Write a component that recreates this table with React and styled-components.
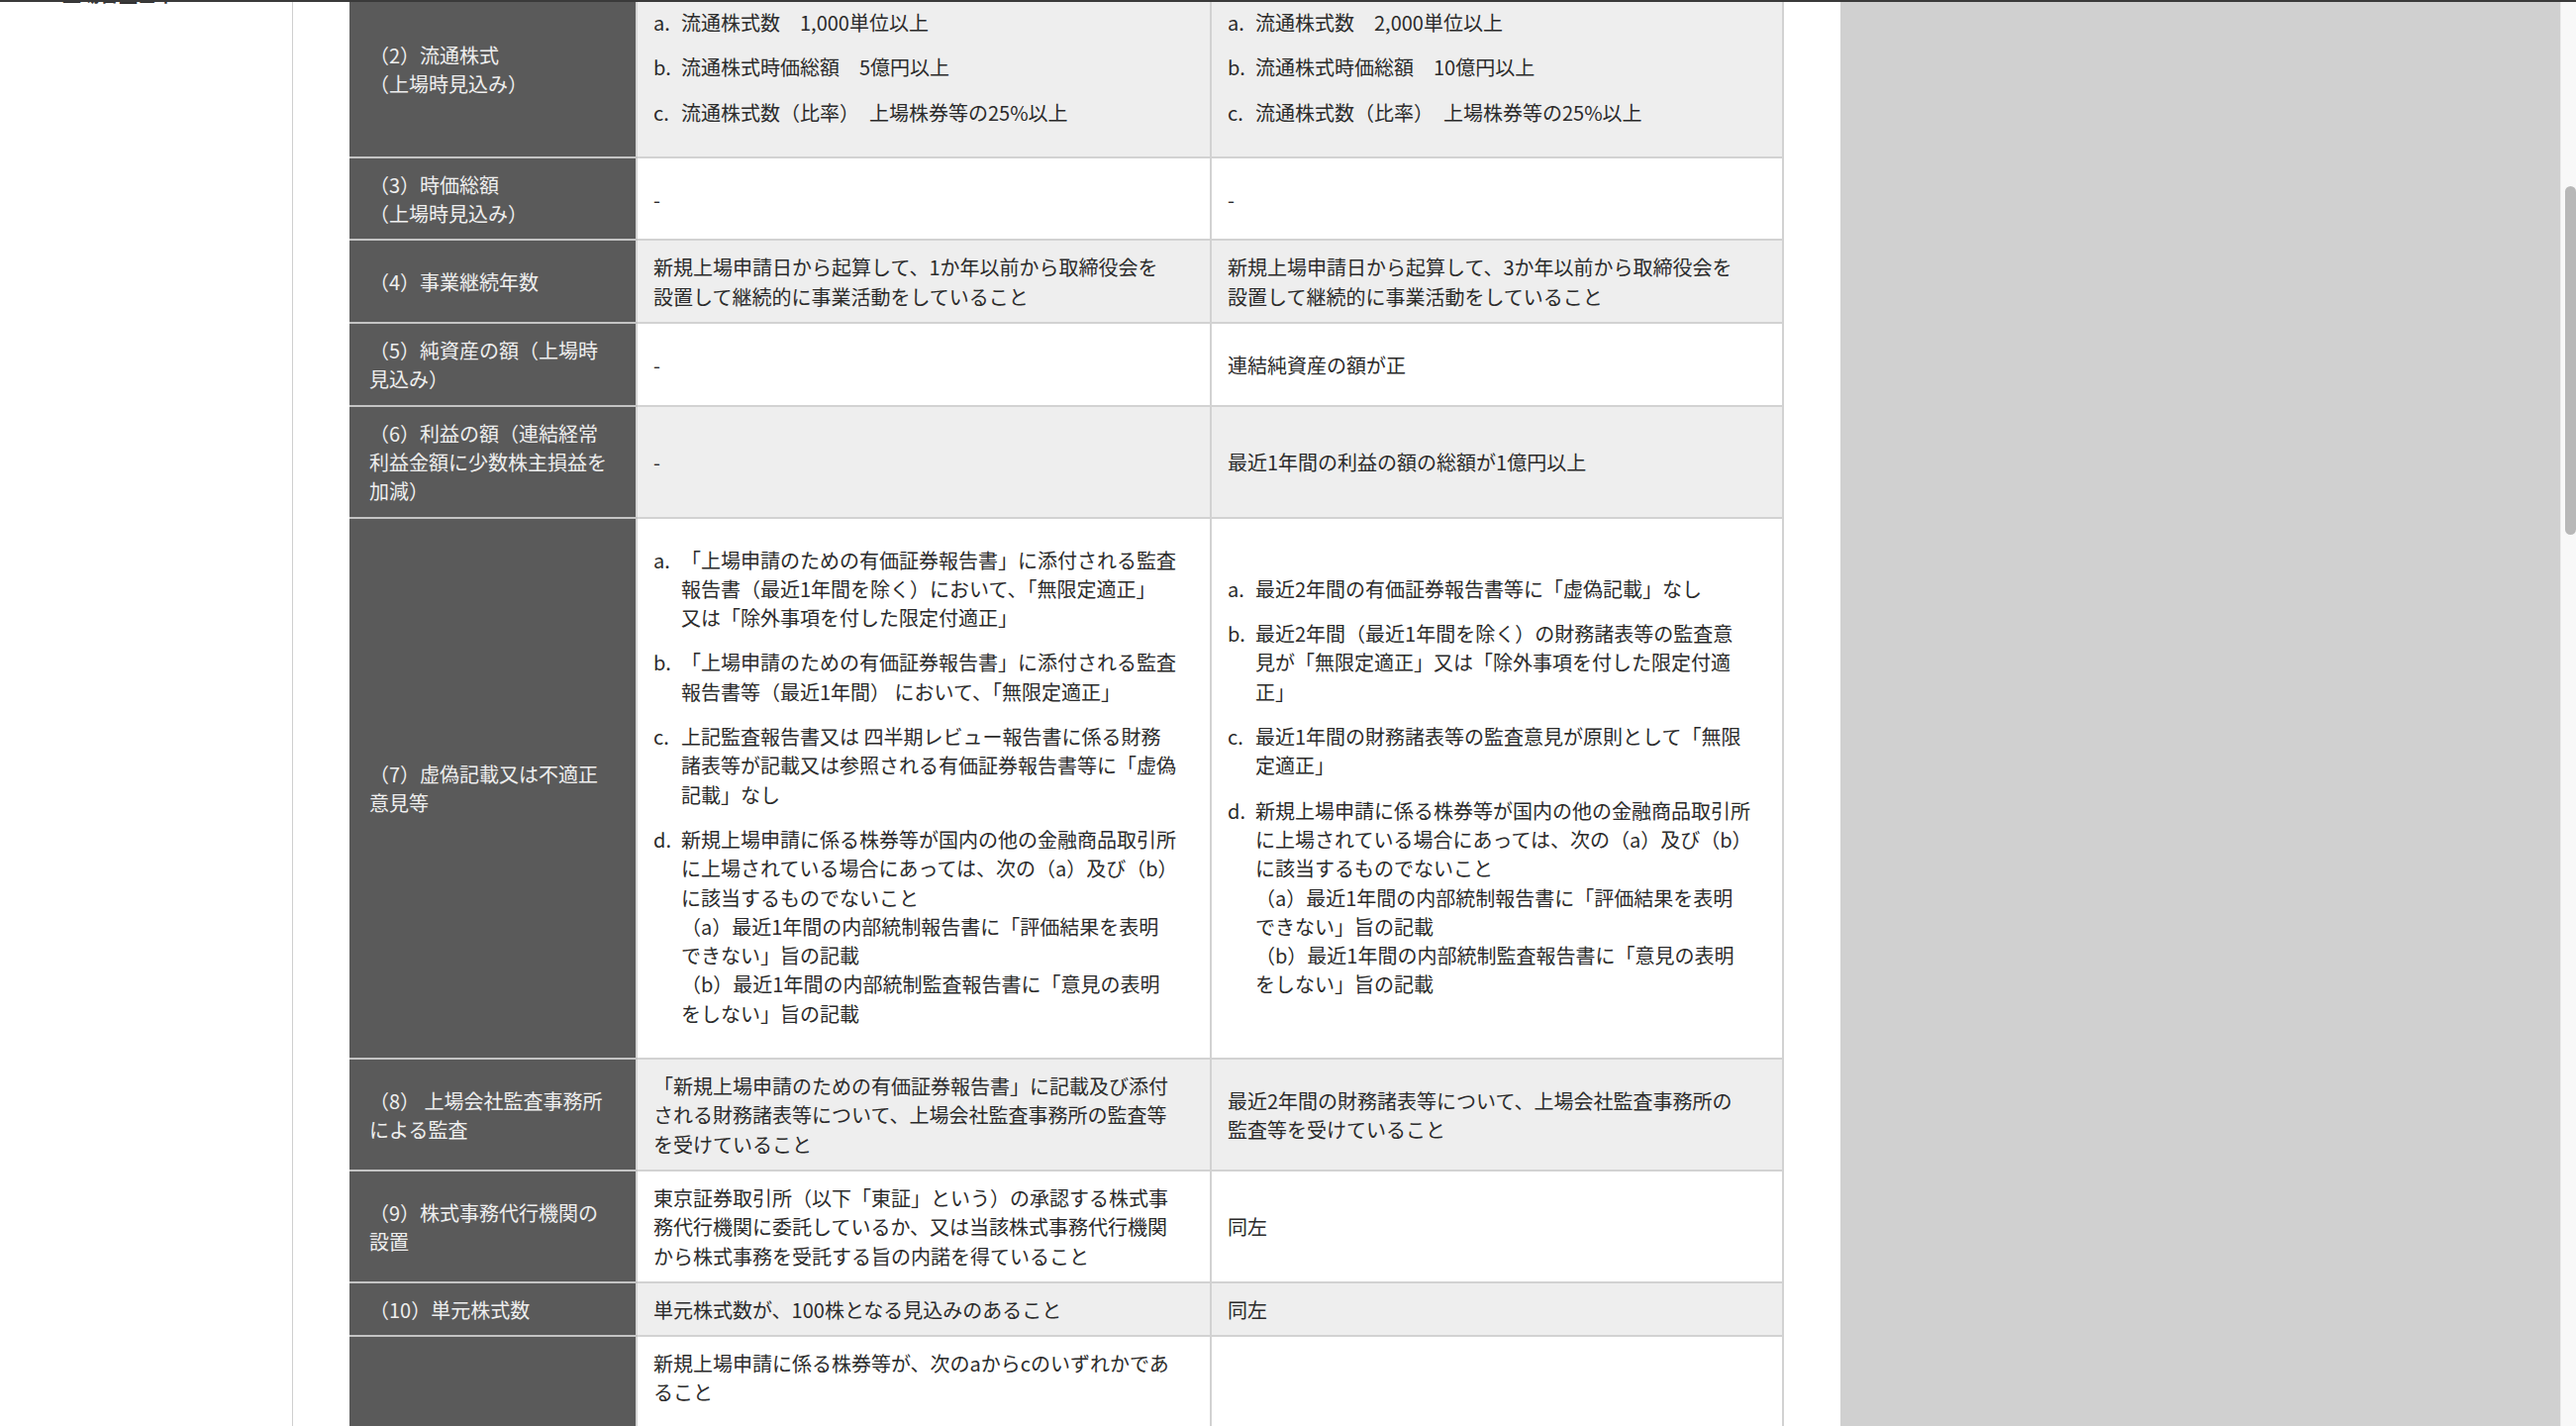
import React, { useLayoutEffect, useRef } from 'react';
import styled, { createGlobalStyle } from 'styled-components';

const GlobalStyle = createGlobalStyle`
  html, body {
    margin: 0;
    height: 100%;
    overflow: hidden;
  }
  body {
    background: #fff;
    color: #2b2b2b;
    font-family: "Noto Sans CJK JP", "Noto Sans", sans-serif;
  }
`;

// Frame
const Window = styled.div`
  height: 100vh;
  display: flex;
  flex-direction: column;
`;

const TopEdge = styled.div`
  flex: none;
  height: 2px;
  background: #3a3a3a;
`;

const Viewport = styled.div`
  flex: 1;
  min-height: 0;
  display: flex;
`;

const Scroller = styled.div`
  flex: 1;
  overflow: hidden;
`;

const Page = styled.div`
  display: grid;
  grid-template-columns: 296px 1fr 727px;
`;

const Sidebar = styled.aside`
  border-right: 1px solid #cfcfcf;
  padding-left: 63px;
`;

const SideTitle = styled.div`
  font-size: 19px;
  line-height: 26px;
  font-weight: 700;
  color: #333;
`;

const Main = styled.main`
  padding-left: 57px;
`;

const Aside = styled.div`
  background: #d0d0d0;
`;

const ScrollTrack = styled.div`
  flex: none;
  width: 16px;
  background: #f8f8f8;
  border-left: 1px solid #ececec;
  box-sizing: border-box;
`;

const ScrollThumb = styled.div`
  width: 11px;
  height: 352px;
  margin: 186px 0 0 4px;
  border-radius: 6px;
  background: #b8b8b8;
`;

// Table
const Table = styled.table`
  width: 1448px;
  border-collapse: collapse;
  table-layout: fixed;
  font-size: 20px;
  line-height: 29.3px;
`;

const Col = styled.col`
  width: ${p => p.$w}px;
`;

const Row = styled.tr`
  background: ${p => (p.$shade ? '#eeeeee' : '#ffffff')};
`;

const Head = styled.th`
  background: #5a5a5a;
  color: #eeeeee;
  font-weight: normal;
  text-align: left;
  vertical-align: middle;
  padding: 12px 20px 11px;
  border-bottom: 2px solid #c4c4c4;
  border-right: 2px solid #d6d6d6;
`;

const Cell = styled.td`
  vertical-align: middle;
  padding: 12px 16px 11px;
  color: #2b2b2b;
  border-bottom: 2px solid #d2d2d2;
  border-right: 2px solid #d2d2d2;
`;

const Items = styled.ul`
  list-style: none;
  margin: 15px 0 19px;
  padding: 0;
`;

const Item = styled.li`
  display: flex;
  & + & {
    margin-top: 16px;
  }
`;

const Mark = styled.span`
  flex: none;
  width: 28px;
`;

const Lines = ({ text }) =>
  text.split('\n').map((line, i) => (
    <React.Fragment key={i}>
      {i > 0 && <br />}
      {line}
    </React.Fragment>
  ));

const List = ({ items }) => (
  <Items>
    {items.map(([m, t]) => (
      <Item key={m}>
        <Mark>{m}</Mark>
        <span><Lines text={t} /></span>
      </Item>
    ))}
  </Items>
);

const Content = ({ value }) => {
  if (typeof value === 'string') return <Lines text={value} />;
  if (value.lead) {
    return (
      <>
        <Lines text={value.lead} />
        <List items={value.items} />
      </>
    );
  }
  return <List items={value} />;
};

const naibu =
  '新規上場申請に係る株券等が国内の他の金融商品取引所\nに上場されている場合にあっては、次の（a）及び（b）\nに該当するものでないこと\n（a）最近1年間の内部統制報告書に「評価結果を表明\nできない」旨の記載\n（b）最近1年間の内部統制監査報告書に「意見の表明\nをしない」旨の記載';

const rows = [
  {
    label: '（2）流通株式\n（上場時見込み）',
    growth: [
      ['a.', '流通株式数　1,000単位以上'],
      ['b.', '流通株式時価総額　5億円以上'],
      ['c.', '流通株式数（比率）　上場株券等の25%以上'],
    ],
    standard: [
      ['a.', '流通株式数　2,000単位以上'],
      ['b.', '流通株式時価総額　10億円以上'],
      ['c.', '流通株式数（比率）　上場株券等の25%以上'],
    ],
  },
  { label: '（3）時価総額\n（上場時見込み）', growth: '-', standard: '-' },
  {
    label: '（4）事業継続年数',
    growth: '新規上場申請日から起算して、1か年以前から取締役会を\n設置して継続的に事業活動をしていること',
    standard: '新規上場申請日から起算して、3か年以前から取締役会を\n設置して継続的に事業活動をしていること',
  },
  { label: '（5）純資産の額（上場時\n見込み）', growth: '-', standard: '連結純資産の額が正' },
  {
    label: '（6）利益の額（連結経常\n利益金額に少数株主損益を\n加減）',
    growth: '-',
    standard: '最近1年間の利益の額の総額が1億円以上',
  },
  {
    label: '（7）虚偽記載又は不適正\n意見等',
    growth: [
      ['a.', '「上場申請のための有価証券報告書」に添付される監査\n報告書（最近1年間を除く）において、「無限定適正」\n又は「除外事項を付した限定付適正」'],
      ['b.', '「上場申請のための有価証券報告書」に添付される監査\n報告書等（最近1年間） において、「無限定適正」'],
      ['c.', '上記監査報告書又は 四半期レビュー報告書に係る財務\n諸表等が記載又は参照される有価証券報告書等に「虚偽\n記載」なし'],
      ['d.', naibu],
    ],
    standard: [
      ['a.', '最近2年間の有価証券報告書等に「虚偽記載」なし'],
      ['b.', '最近2年間（最近1年間を除く）の財務諸表等の監査意\n見が「無限定適正」又は「除外事項を付した限定付適\n正」'],
      ['c.', '最近1年間の財務諸表等の監査意見が原則として「無限\n定適正」'],
      ['d.', naibu],
    ],
  },
  {
    label: '（8） 上場会社監査事務所\nによる監査',
    growth: '「新規上場申請のための有価証券報告書」に記載及び添付\nされる財務諸表等について、上場会社監査事務所の監査等\nを受けていること',
    standard: '最近2年間の財務諸表等について、上場会社監査事務所の\n監査等を受けていること',
  },
  {
    label: '（9）株式事務代行機関の\n設置',
    growth: '東京証券取引所（以下「東証」という）の承認する株式事\n務代行機関に委託しているか、又は当該株式事務代行機関\nから株式事務を受託する旨の内諾を得ていること',
    standard: '同左',
  },
  { label: '（10）単元株式数', growth: '単元株式数が、100株となる見込みのあること', standard: '同左' },
  {
    label: '（11）株券等の種類',
    growth: {
      lead: '新規上場申請に係る株券等が、次のaからcのいずれかであ\nること',
      items: [
        ['a.', '議決権付株式を1種類のみ発行している会社における当\n該議決権付株式'],
        ['b.', '複数の種類の議決権付株式を発行している会社におい\nて、経済的利益を受ける権利の価額等が他のいずれかの\n種類の議決権付株式よりも高い種類の議決権付株式'],
        ['c.', '無議決権株式'],
      ],
    },
    standard: '同左',
  },
];

const App = () => {
  const scrollRef = useRef(null);

  useLayoutEffect(() => {
    if (scrollRef.current) scrollRef.current.scrollTop = 21;
  }, []);

  return (
    <>
      <GlobalStyle />
      <Window>
        <TopEdge />
        <Viewport>
          <Scroller ref={scrollRef}>
            <Page>
              <Sidebar>
                <SideTitle>上場審査基準</SideTitle>
              </Sidebar>
              <Main>
                <Table>
                  <colgroup>
                    <Col $w={290} />
                    <Col $w={580} />
                    <Col $w={578} />
                  </colgroup>
                  <tbody>
                    {rows.map((r, i) => (
                      <Row key={r.label} $shade={i % 2 === 0}>
                        <Head><Lines text={r.label} /></Head>
                        <Cell><Content value={r.growth} /></Cell>
                        <Cell><Content value={r.standard} /></Cell>
                      </Row>
                    ))}
                  </tbody>
                </Table>
              </Main>
              <Aside />
            </Page>
          </Scroller>
          <ScrollTrack>
            <ScrollThumb />
          </ScrollTrack>
        </Viewport>
      </Window>
    </>
  );
};

export default App;
